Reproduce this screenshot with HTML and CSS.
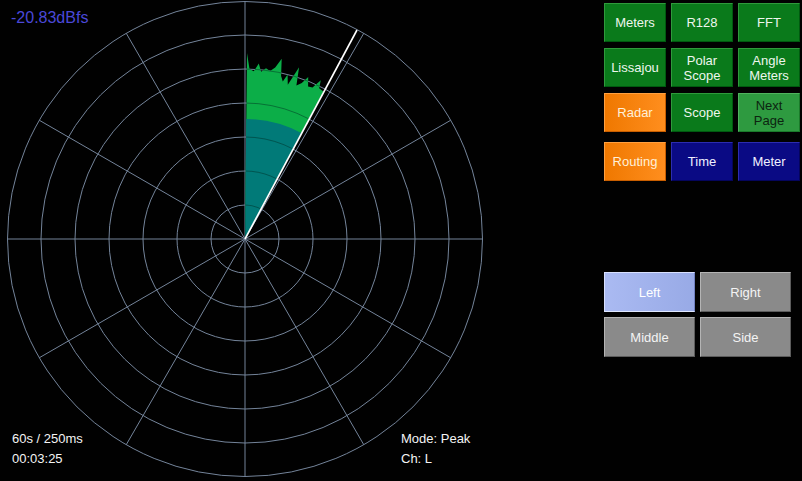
FILE: index.html
```html
<!DOCTYPE html>
<html>
<head>
<meta charset="utf-8">
<link rel="stylesheet" href="styles.css">
</head>
<body>
<div class="app">
  <div class="scope">
    <svg class="radar" width="490" height="481" viewBox="0 0 490 481">
      <defs>
        <clipPath id="wedgeClip">
          <path d="M245,239 L247,53 L249.5,69.1 L253.8,71.2 L258.8,63.5 L261.1,71.8 L266,68.3 L270.1,70.9 L275.2,67.6 L281.7,58.7 L281.1,76 L282.8,81.5 L287.6,74.4 L287.8,84.8 L299.1,67.3 L296.4,85.4 L301.8,83 L308.2,76.9 L308.1,86.6 L312.5,87.4 L320.8,80.2 L319.2,88.3 L323.4,91.5 Z"/>
        </clipPath>
        <g id="grid" fill="none">
          <circle cx="245" cy="239" r="34"/>
          <circle cx="245" cy="239" r="68"/>
          <circle cx="245" cy="239" r="102"/>
          <circle cx="245" cy="239" r="136"/>
          <circle cx="245" cy="239" r="170"/>
          <circle cx="245" cy="239" r="204"/>
          <circle cx="245" cy="239" r="237.5"/>
          <line x1="245" y1="1.5" x2="245" y2="476.5"/>
          <line x1="7.5" y1="239" x2="482.5" y2="239"/>
          <line x1="363.75" y1="33.3" x2="126.25" y2="444.7"/>
          <line x1="450.7" y1="120.25" x2="39.3" y2="357.75"/>
          <line x1="450.7" y1="357.75" x2="39.3" y2="120.25"/>
          <line x1="363.75" y1="444.7" x2="126.25" y2="33.3"/>
        </g>
      </defs>
      <use href="#grid" class="grid-lines"/>
      <path class="wedge-green" d="M245,239 L247,53 L249.5,69.1 L253.8,71.2 L258.8,63.5 L261.1,71.8 L266,68.3 L270.1,70.9 L275.2,67.6 L281.7,58.7 L281.1,76 L282.8,81.5 L287.6,74.4 L287.8,84.8 L299.1,67.3 L296.4,85.4 L301.8,83 L308.2,76.9 L308.1,86.6 L312.5,87.4 L320.8,80.2 L319.2,88.3 L323.4,91.5 Z"/>
      <path class="wedge-teal" d="M245,239 L246.3,119 A120,120 0 0 1 301.3,133 Z"/>
      <use href="#grid" class="grid-shade" clip-path="url(#wedgeClip)"/>
      <line class="sweep" x1="245" y1="239" x2="357" y2="30"/>
    </svg>
    <div class="level">-20.83dBfs</div>
    <div class="info info-left">
      <div>60s / 250ms</div>
      <div>00:03:25</div>
    </div>
    <div class="info info-right">
      <div>Mode: Peak</div>
      <div>Ch: L</div>
    </div>
  </div>

  <div class="panel">
    <div class="views">
      <div class="btn green">Meters</div>
      <div class="btn green">R128</div>
      <div class="btn green">FFT</div>
      <div class="btn green">Lissajou</div>
      <div class="btn green">Polar<br>Scope</div>
      <div class="btn green">Angle<br>Meters</div>
      <div class="btn orange">Radar</div>
      <div class="btn green">Scope</div>
      <div class="btn light-green">Next<br>Page</div>
    </div>
    <div class="views row4">
      <div class="btn orange">Routing</div>
      <div class="btn blue">Time</div>
      <div class="btn blue">Meter</div>
    </div>
    <div class="channels">
      <div class="btn chan active">Left</div>
      <div class="btn chan">Right</div>
      <div class="btn chan">Middle</div>
      <div class="btn chan">Side</div>
    </div>
  </div>
</div>
</body>
</html>
```

FILE: styles.css
```css
html, body {
  margin: 0;
  padding: 0;
  background: #000;
}

body {
  font-family: "Liberation Sans", Arial, sans-serif;
  color: #fff;
}

.app {
  display: flex;
  width: 802px;
  height: 481px;
  overflow: hidden;
  background: #010101;
}

.scope {
  position: relative;
  width: 490px;
  height: 481px;
  flex: none;
}

.radar {
  display: block;
}

.grid-lines {
  stroke: #74849a;
  stroke-width: 1;
}

.grid-shade {
  stroke: rgba(0, 40, 30, 0.45);
  stroke-width: 1;
}

.wedge-green {
  fill: #0cae48;
}

.wedge-teal {
  fill: #017a78;
}

.sweep {
  stroke: #ffffff;
  stroke-width: 1.6;
}

.level {
  position: absolute;
  left: 11px;
  top: 8px;
  font-size: 16px;
  color: #4a48d8;
  line-height: 20px;
}

.info {
  position: absolute;
  top: 429px;
  font-size: 13px;
  line-height: 20px;
  color: #f4f4f4;
}

.info-left {
  left: 12px;
}

.info-right {
  left: 401px;
}

.panel {
  margin-left: 114px;
  padding-top: 3px;
  width: 196px;
  flex: none;
}

.views {
  display: grid;
  grid-template-columns: repeat(3, 62px);
  grid-auto-rows: 39px;
  gap: 6px 5px;
}

.row4 {
  margin-top: 10px;
}

.channels {
  margin-top: 91px;
  display: grid;
  grid-template-columns: 91px 91px;
  grid-auto-rows: 40px;
  gap: 5px 5px;
}

.btn {
  box-sizing: border-box;
  display: flex;
  align-items: center;
  justify-content: center;
  text-align: center;
  font-size: 13px;
  line-height: 15px;
  border: 1px solid;
}

.green {
  background: #0a7a1b;
  border-color: #2f9a3c #005a10 #005a10 #2f9a3c;
  color: #eef6ee;
}

.light-green {
  background: #2e9a40;
  border-color: #50b25e #1a7a2a #1a7a2a #50b25e;
  color: #0c2410;
}

.orange {
  background: linear-gradient(to right, #ef7800, #ff8e1e);
  border-color: #ffa040 #c85e00 #c85e00 #ffa040;
  color: #fff0d8;
}

.blue {
  background: #0a0a84;
  border-color: #2c2cb0 #05055c #05055c #2c2cb0;
  color: #f0f0ff;
}

.chan {
  background: #8a8a8a;
  border-color: #b4b4b4 #5c5c5c #5c5c5c #b4b4b4;
  color: #f4f4f4;
}

.chan.active {
  background: linear-gradient(to right, #aabaf2, #98aae6);
  border-color: #d8e0ff #7080c0 #e0e8ff #d8e0ff;
  color: #ffffff;
}
```
